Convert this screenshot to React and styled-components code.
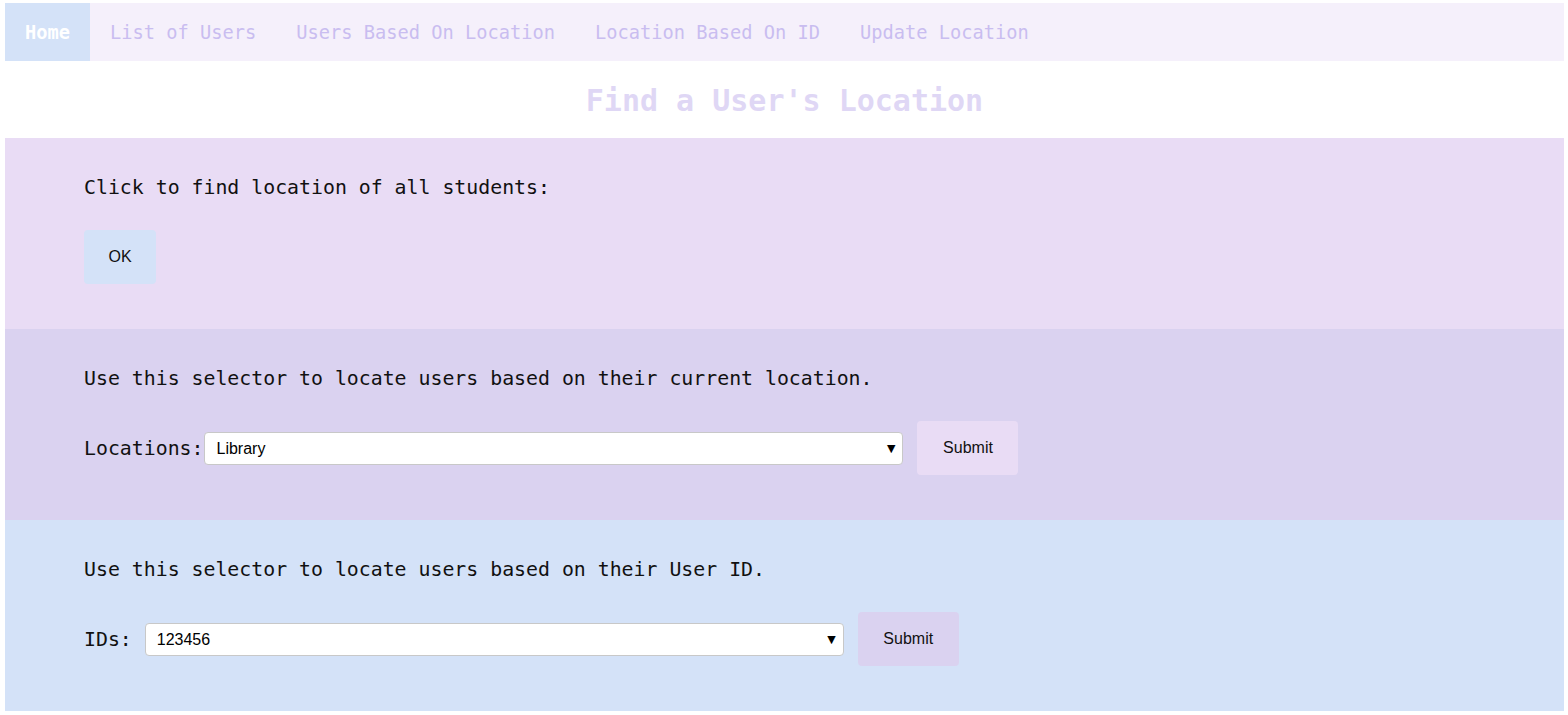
import React from 'react';
import styled, { createGlobalStyle } from 'styled-components';

const GlobalStyle = createGlobalStyle`
  html, body {
    margin: 0;
    padding: 0;
    background: #ffffff;
  }
  body {
    padding: 3px 4px 0 5px;
    font-family: "DejaVu Sans Mono", "Liberation Mono", monospace;
  }
`;

const Nav = styled.nav`
  display: flex;
  height: 58px;
  background: #f5f0fb;
`;

const NavLink = styled.a`
  display: flex;
  align-items: center;
  padding: 0 20px;
  font-size: 18.7px;
  text-decoration: none;
  color: ${({ active }) => (active ? '#ffffff' : '#c9bdf0')};
  background: ${({ active }) => (active ? '#d4e2f8' : 'transparent')};
  font-weight: ${({ active }) => (active ? 'bold' : 'normal')};
`;

const Title = styled.h1`
  margin: 0;
  height: 77px;
  padding-top: 2px;
  box-sizing: border-box;
  display: flex;
  align-items: center;
  justify-content: center;
  font-size: 30px;
  font-weight: bold;
  color: #dfd7f5;
`;

const Section = styled.section`
  background: ${({ bg }) => bg};
  height: 191px;
  box-sizing: border-box;
  padding: 38px 79px 0;
`;

const Text = styled.p`
  margin: 0 0 30px;
  font-size: 19.85px;
  line-height: 24px;
  color: #111;
`;

const Row = styled.div`
  display: flex;
  align-items: center;
  gap: 14px;
`;

const Label = styled.label`
  font-size: 19.85px;
  color: #111;
  white-space: pre;
  margin-right: -13px;
`;

const SelectWrap = styled.div`
  position: relative;
  width: 699px;

  &::after {
    content: "▼";
    position: absolute;
    right: 8px;
    top: 50%;
    transform: translateY(-50%);
    font-family: "DejaVu Sans", sans-serif;
    font-size: 11px;
    color: #000;
    pointer-events: none;
  }
`;

const Select = styled.select`
  appearance: none;
  width: 100%;
  height: 33px;
  padding: 0 11px;
  border: 1px solid #c8c8c8;
  border-radius: 4px;
  background: #ffffff;
  font-family: "Liberation Sans", Arial, sans-serif;
  font-size: 16px;
  color: #000;
`;

const Button = styled.button`
  height: 54px;
  width: ${({ w }) => w}px;
  border: none;
  border-radius: 4px;
  background: ${({ bg }) => bg};
  font-family: "Liberation Sans", Arial, sans-serif;
  font-size: 16px;
  color: #111;
`;

export default function App() {
  return (
    <>
      <GlobalStyle />
      <Nav>
        <NavLink active>Home</NavLink>
        <NavLink>List of Users</NavLink>
        <NavLink>Users Based On Location</NavLink>
        <NavLink>Location Based On ID</NavLink>
        <NavLink>Update Location</NavLink>
      </Nav>
      <Title>Find a User's Location</Title>

      <Section bg="#e9dcf5">
        <Text>Click to find location of all students:</Text>
        <Button w={72} bg="#d4e2f8">OK</Button>
      </Section>

      <Section bg="#dad2f0">
        <Text>Use this selector to locate users based on their current location.</Text>
        <Row>
          <Label>Locations:</Label>
          <SelectWrap>
            <Select defaultValue="Library">
              <option>Library</option>
              <option>Cafeteria</option>
              <option>Gym</option>
            </Select>
          </SelectWrap>
          <Button w={101} bg="#e9dcf5">Submit</Button>
        </Row>
      </Section>

      <Section bg="#d4e2f8">
        <Text>Use this selector to locate users based on their User ID.</Text>
        <Row>
          <Label>IDs: </Label>
          <SelectWrap>
            <Select defaultValue="123456">
              <option>123456</option>
              <option>234567</option>
            </Select>
          </SelectWrap>
          <Button w={101} bg="#dad2f0">Submit</Button>
        </Row>
      </Section>
    </>
  );
}
